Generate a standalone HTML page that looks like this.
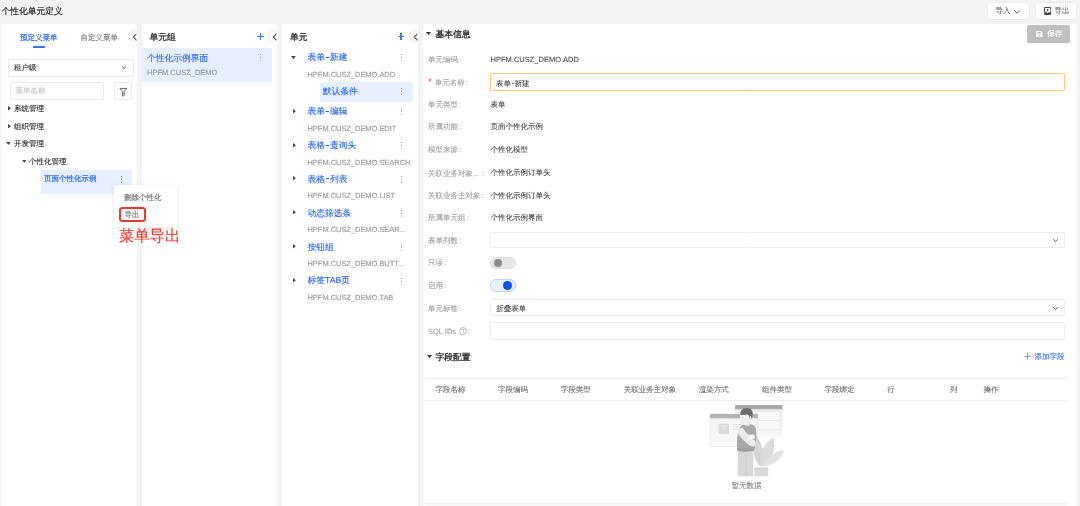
<!DOCTYPE html>
<html><head><meta charset="utf-8">
<style>
*{box-sizing:border-box;margin:0;padding:0}
html,body{width:1080px;height:506px;overflow:hidden}
body{background:#f2f3f5;font-family:"Liberation Sans",sans-serif;position:relative;color:#333;text-rendering:geometricPrecision}
.a{position:absolute;white-space:nowrap;line-height:20px;height:20px;font-size:7.5px;-webkit-text-stroke:0.15px currentColor}
.p{position:absolute;background:#fff;top:24.2px;bottom:0;border-radius:2px 2px 0 0}
.L{font-size:8.75px}
.b{-webkit-text-stroke:0.32px currentColor}
.m{-webkit-text-stroke:0.16px currentColor}
.blue{color:#1f62f2}
.L.blue{-webkit-text-stroke:0.1px currentColor}
.g9{color:#999}
.g6{color:#666}
.box{position:absolute;border:0.7px solid #eaeaea;border-radius:2px;background:#fff}
.circ{position:absolute;width:12px;height:12px;border-radius:50%;border:0.75px solid #e6e6e6;background:#fff}
.circ svg{position:absolute;left:0;top:0}
.tri{position:absolute}
.keb{position:absolute;width:1.2px;height:1.2px;background:#3070f2;border-radius:50%;box-shadow:0 2.7px 0 #3070f2,0 5.4px 0 #3070f2}
.plus{position:absolute;width:6.8px;height:6.8px}
.plus:before{content:"";position:absolute;left:0;top:2.8px;width:6.8px;height:1.2px;background:#3d78f4}
.plus:after{content:"";position:absolute;left:2.8px;top:0;width:1.2px;height:6.8px;background:#3d78f4}
.lab{-webkit-text-stroke:0.08px currentColor;position:absolute;left:428px;white-space:nowrap;line-height:20px;height:20px;font-size:7.5px;color:#999}
.val{-webkit-text-stroke:0.06px currentColor;position:absolute;left:490.6px;white-space:nowrap;line-height:20px;height:20px;font-size:7.5px;color:#3a3a3a}
.inp{position:absolute;left:490.25px;width:574.5px;border:0.7px solid #ececec;border-radius:1.5px;background:#fff}
.th{-webkit-text-stroke:0.1px currentColor;position:absolute;top:379.5px;white-space:nowrap;line-height:20px;height:20px;font-size:7.5px;color:#6e6e6e}
.chev{position:absolute}
.c{font-style:normal;margin-left:1.2px}
.hy{display:inline-block;position:relative;width:5px;height:1px}
.hy:after{content:"";position:absolute;left:0.7px;top:-2.6px;width:3.6px;height:0.85px;background:currentColor}
.hy2{display:inline-block;position:relative;width:3.6px;height:1px}
.hy2:after{content:"";position:absolute;left:0.6px;top:-1.7px;width:2.4px;height:0.8px;background:#777}
.code{font-size:7.45px}
#root{position:absolute;left:0;top:0;width:1080px;height:506px;will-change:transform}
</style></head><body><div id="root">
<!-- header -->
<div class="a L m" style="left:1.5px;top:0.9px;color:#1a1a1a">个性化单元定义</div>
<div class="box" style="left:987.4px;top:2.4px;width:42.2px;height:17.2px;border-color:#ebebeb"></div>
<div class="a" style="left:995.5px;top:1.2px;color:#555;-webkit-text-stroke:0.05px #555">导入</div>
<svg class="chev" style="left:1013.7px;top:9.6px" width="6.5" height="4" viewBox="0 0 6.5 4"><path d="M0.5 0.5 L3.25 3.3 L6 0.5" fill="none" stroke="#555" stroke-width="0.95" stroke-linecap="round" stroke-linejoin="round"/></svg>
<div class="box" style="left:1035.3px;top:2.4px;width:42px;height:17.2px;border-color:#ebebeb"></div>
<svg style="position:absolute;left:1043.8px;top:6.9px" width="7.3" height="7.9" viewBox="0 0 7.3 7.9"><rect x="0" y="0" width="7.3" height="7.9" rx="1.1" fill="#4a4a4a"/><path d="M1 1 H6.3 V5.3 H4.5 L3.65 6.2 L2.8 5.3 H1 Z" fill="#fff"/><path d="M3.65 2 V4.3" stroke="#4a4a4a" stroke-width="1.1"/><path d="M2.8 3.6 L3.65 4.6 L4.5 3.6 Z" fill="#4a4a4a"/></svg>
<div class="a" style="left:1054.5px;top:1.2px;color:#555;-webkit-text-stroke:0.05px #555">导出</div>

<div style="position:absolute;left:136px;top:24.2px;width:287px;bottom:0;background:#f4f4f4"></div>
<!-- panel 1 -->
<div class="p" style="left:1.2px;width:135.8px"></div>
<div class="a m blue" style="left:20px;top:28px">预定义菜单</div>
<div class="a" style="left:80.5px;top:28px;color:#7a7a7a">自定义菜单</div>
<div style="position:absolute;left:32.5px;top:46px;width:12.3px;height:1.6px;background:#3a72f3"></div>
<div class="box" style="left:8px;top:59px;width:126px;height:17.5px"></div>
<div class="a" style="left:14px;top:58px;color:#333">租户级</div>
<svg class="chev" style="left:121.8px;top:66.1px" width="4.5" height="3.2" viewBox="0 0 4.5 3.2"><path d="M0.5 0.5 L2.25 2.6 L4 0.5" fill="none" stroke="#555" stroke-width="0.95" stroke-linecap="round" stroke-linejoin="round"/></svg>
<div class="box" style="left:10px;top:82px;width:94px;height:17.5px"></div>
<div class="a" style="left:15.5px;top:81px;color:#c4c4c4">菜单名称</div>
<div class="box" style="left:114px;top:82px;width:18px;height:17.5px"></div>
<svg style="position:absolute;left:118.6px;top:87px" width="9" height="10" viewBox="0 0 9 10"><path d="M0.9 1.4 H7.9 L5.2 4.6 V8.4 L3.7 9.2 V4.6 Z" fill="none" stroke="#555" stroke-width="0.9" stroke-linejoin="round"/><rect x="3.8" y="5" width="1.3" height="3.6" fill="#aaa"/></svg>
<div class="circ" style="left:127.5px;top:30px"><svg width="12" height="12" viewBox="0 0 12 12"><path d="M7.1 3.1 L4.3 6 L7.1 8.9" fill="none" stroke="#555" stroke-width="1.1" stroke-linecap="round" stroke-linejoin="round"/></svg></div>

<svg class="tri" style="left:7.9px;top:106.3px" width="3.1" height="4.4" viewBox="0 0 3.1 4.4"><path d="M0 0 L3.1 2.20 L0 4.4 Z" fill="#444"/></svg>
<div class="a" style="left:14px;top:99px">系统管理</div>
<svg class="tri" style="left:7.9px;top:123.8px" width="3.1" height="4.4" viewBox="0 0 3.1 4.4"><path d="M0 0 L3.1 2.20 L0 4.4 Z" fill="#444"/></svg>
<div class="a" style="left:14px;top:116.5px">组织管理</div>
<svg class="tri" style="left:6.3px;top:142.4px" width="4.8" height="2.9" viewBox="0 0 4.8 2.9"><path d="M0 0 L4.8 0 L2.40 2.9 Z" fill="#444"/></svg>
<div class="a" style="left:14px;top:134px">开发管理</div>
<svg class="tri" style="left:21.6px;top:159.9px" width="4.6" height="2.8" viewBox="0 0 4.6 2.8"><path d="M0 0 L4.6 0 L2.30 2.8 Z" fill="#444"/></svg>
<div class="a" style="left:29px;top:151.5px">个性化管理</div>
<div style="position:absolute;left:41px;top:170px;width:91px;height:24px;background:#e5efff;border-radius:1px"></div>
<div class="a m blue" style="left:44px;top:168.9px">页面个性化示例</div>
<div class="keb" style="left:120.5px;top:175.5px"></div>

<!-- panel 2 -->
<div class="p" style="left:142px;width:135px"></div>
<div class="a L b" style="left:149.5px;top:26.8px;color:#2b2b2b">单元组</div>
<div class="plus" style="left:257.2px;top:33.4px"></div>
<div style="position:absolute;left:142px;top:48px;width:130px;height:34px;background:#e5efff"></div>
<div class="a L blue" style="left:147px;top:47.75px">个性化示例界面</div>
<div class="a g9" style="left:147px;top:62.5px">HPFM.CUSZ_DEMO</div>
<div class="keb" style="left:260.3px;top:54px"></div>
<div class="circ" style="left:267.9px;top:30px"><svg width="12" height="12" viewBox="0 0 12 12"><path d="M7.1 3.1 L4.3 6 L7.1 8.9" fill="none" stroke="#555" stroke-width="1.1" stroke-linecap="round" stroke-linejoin="round"/></svg></div>

<!-- panel 3 -->
<div class="p" style="left:282px;width:136px"></div>
<div class="a L b" style="left:290px;top:26.5px;color:#2b2b2b">单元</div>
<div class="plus" style="left:397.6px;top:33.4px"></div>
<div class="circ" style="left:408.5px;top:30px"><svg width="12" height="12" viewBox="0 0 12 12"><path d="M7.1 3.1 L4.3 6 L7.1 8.9" fill="none" stroke="#555" stroke-width="1.1" stroke-linecap="round" stroke-linejoin="round"/></svg></div>

<svg class="tri" style="left:291.2px;top:56.1px" width="4.8" height="2.9" viewBox="0 0 4.8 2.9"><path d="M0 0 L4.8 0 L2.40 2.9 Z" fill="#444"/></svg>
<div class="a L blue" style="left:307.5px;top:47.4px">表单<span class="hy"></span>新建</div>
<div class="keb" style="left:400.7px;top:54px"></div>
<div class="a g9 code" style="left:307.5px;top:64.7px">HPFM.CUSZ_DEMO.ADD</div>
<div style="position:absolute;left:320px;top:82px;width:92.7px;height:20px;background:#e5efff;border-radius:2px"></div>
<div class="a L blue" style="left:322.7px;top:81.4px">默认条件</div>
<div class="keb" style="left:400.7px;top:88px"></div>

<svg class="tri" style="left:292.8px;top:108.9px" width="2.9" height="4.5" viewBox="0 0 2.9 4.5"><path d="M0 0 L2.9 2.25 L0 4.5 Z" fill="#444"/></svg>
<div class="a L blue" style="left:307.5px;top:101.4px">表单<span class="hy"></span>编辑</div>
<div class="keb" style="left:400.7px;top:108px"></div>
<div class="a g9 code" style="left:307.5px;top:118.5px">HPFM.CUSZ_DEMO.EDIT</div>

<svg class="tri" style="left:292.8px;top:142.9px" width="2.9" height="4.5" viewBox="0 0 2.9 4.5"><path d="M0 0 L2.9 2.25 L0 4.5 Z" fill="#444"/></svg>
<div class="a L blue" style="left:307.5px;top:135.3px">表格<span class="hy"></span>查询头</div>
<div class="keb" style="left:400.7px;top:142px"></div>
<div class="a g9 code" style="left:307.5px;top:152.7px">HPFM.CUSZ_DEMO.SEARCH</div>

<svg class="tri" style="left:292.8px;top:176.4px" width="2.9" height="4.5" viewBox="0 0 2.9 4.5"><path d="M0 0 L2.9 2.25 L0 4.5 Z" fill="#444"/></svg>
<div class="a L blue" style="left:307.5px;top:168.7px">表格<span class="hy"></span>列表</div>
<div class="keb" style="left:400.7px;top:175.5px"></div>
<div class="a g9 code" style="left:307.5px;top:186.4px">HPFM.CUSZ_DEMO.LIST</div>

<svg class="tri" style="left:292.8px;top:210.4px" width="2.9" height="4.5" viewBox="0 0 2.9 4.5"><path d="M0 0 L2.9 2.25 L0 4.5 Z" fill="#444"/></svg>
<div class="a L blue" style="left:307.5px;top:202.5px">动态筛选条</div>
<div class="keb" style="left:400.7px;top:209.5px"></div>
<div class="a g9 code" style="left:307.5px;top:220.2px">HPFM.CUSZ_DEMO.SEAR...</div>

<svg class="tri" style="left:292.8px;top:244.4px" width="2.9" height="4.5" viewBox="0 0 2.9 4.5"><path d="M0 0 L2.9 2.25 L0 4.5 Z" fill="#444"/></svg>
<div class="a L blue" style="left:307.5px;top:236.6px">按钮组</div>
<div class="keb" style="left:400.7px;top:243.5px"></div>
<div class="a g9 code" style="left:307.5px;top:254.3px">HPFM.CUSZ_DEMO.BUTT...</div>

<svg class="tri" style="left:292.8px;top:278.4px" width="2.9" height="4.5" viewBox="0 0 2.9 4.5"><path d="M0 0 L2.9 2.25 L0 4.5 Z" fill="#444"/></svg>
<div class="a L blue" style="left:307.5px;top:270.4px">标签TAB页</div>
<div class="keb" style="left:400.7px;top:277.5px"></div>
<div class="a g9 code" style="left:307.5px;top:287.8px">HPFM.CUSZ_DEMO.TAB</div>

<!-- panel 4 -->
<div class="p" style="left:422.5px;width:654.6px"></div>
<div style="position:absolute;left:1027px;top:25px;width:43px;height:17.5px;background:#bfbfbf;border-radius:2px"></div>
<svg style="position:absolute;left:1036px;top:30.6px" width="6.5" height="6.7" viewBox="0 0 6.5 6.7"><path d="M0 0.6 Q0 0 0.6 0 H5 L6.5 1.5 V6.1 Q6.5 6.7 5.9 6.7 H0.6 Q0 6.7 0 6.1 Z" fill="#fff"/><rect x="1.2" y="0.9" width="3.4" height="1.6" fill="#bfbfbf"/><circle cx="3.25" cy="4.5" r="0.9" fill="#bfbfbf"/></svg>
<div class="a" style="left:1047.3px;top:24.3px;color:#fff">保存</div>

<svg class="tri" style="left:426.3px;top:32.3px" width="5.1" height="3" viewBox="0 0 5.1 3"><path d="M0 0 L5.1 0 L2.55 3 Z" fill="#333"/></svg>
<div class="a L b" style="left:435.6px;top:24.2px;color:#2b2b2b">基本信息</div>

<div class="lab" style="top:49.8px">单元编码<i class="c">:</i></div>
<div class="val" style="top:50px">HPFM.CUSZ_DEMO.ADD</div>

<div class="a" style="left:428.5px;top:72px;color:#f5222d;font-size:7.5px">*</div>
<div class="lab" style="left:434.75px;top:73.3px">单元名称<i class="c">:</i></div>
<div class="inp" style="top:73.1px;height:17.5px;border:0.95px solid #ffc677"></div>
<div class="val" style="left:496px;top:73.6px">表单<span class="hy2"></span>新建</div>

<div class="lab" style="top:95.2px">单元类型<i class="c">:</i></div>
<div class="val" style="top:95.2px">表单</div>
<div class="lab" style="top:117.3px">所属功能<i class="c">:</i></div>
<div class="val" style="top:117.3px">页面个性化示例</div>
<div class="lab" style="top:140.4px">模型来源<i class="c">:</i></div>
<div class="val" style="top:140.4px">个性化模型</div>
<div class="lab" style="top:163.5px">关联业务对象...<i class="c" style="margin-left:3px">:</i></div>
<div class="val" style="top:163px">个性化示例订单头</div>
<div class="lab" style="top:185.8px">关联业务主对象<i class="c">:</i></div>
<div class="val" style="top:185.8px">个性化示例订单头</div>
<div class="lab" style="top:208.3px">所属单元组<i class="c">:</i></div>
<div class="val" style="top:208.3px">个性化示例界面</div>

<div class="lab" style="top:231.1px">表单列数<i class="c">:</i></div>
<div class="inp" style="top:231.9px;height:16.6px"></div>
<svg class="chev" style="left:1053.2px;top:239.1px" width="5" height="3.4" viewBox="0 0 5 3.4"><path d="M0.5 0.5 L2.5 2.7 L4.5 0.5" fill="none" stroke="#555" stroke-width="0.95" stroke-linecap="round" stroke-linejoin="round"/></svg>

<div class="lab" style="top:253px">只读<i class="c">:</i></div>
<div style="position:absolute;left:490.25px;top:256.9px;width:25.4px;height:12.5px;border-radius:6.25px;background:#e6e6e6;border:0.6px solid #dcdcdc"></div>
<div style="position:absolute;left:493.6px;top:258.6px;width:8.9px;height:8.9px;border-radius:50%;background:#8a8a8a"></div>

<div class="lab" style="top:276.1px">启用<i class="c">:</i></div>
<div style="position:absolute;left:490.25px;top:279.1px;width:25.4px;height:12.5px;border-radius:6.25px;background:#e8f0ff;border:0.6px solid #b3cdff"></div>
<div style="position:absolute;left:503.4px;top:280.8px;width:9.1px;height:9.1px;border-radius:50%;background:#0650f5"></div>

<div class="lab" style="top:299.2px">单元标签<i class="c">:</i></div>
<div class="inp" style="top:299.4px;height:17.1px"></div>
<div class="val" style="left:496.25px;top:299.2px">折叠表单</div>
<svg class="chev" style="left:1053.2px;top:307.1px" width="5" height="3.4" viewBox="0 0 5 3.4"><path d="M0.5 0.5 L2.5 2.7 L4.5 0.5" fill="none" stroke="#555" stroke-width="0.95" stroke-linecap="round" stroke-linejoin="round"/></svg>

<div class="lab" style="top:321.8px">SQL IDs</div>
<svg style="position:absolute;left:458.6px;top:327px" width="8" height="8" viewBox="0 0 8 8"><circle cx="4" cy="4" r="3.4" fill="none" stroke="#a0a0a0" stroke-width="0.75"/><path d="M2.9 3.1 Q2.9 2.1 4 2.1 Q5.1 2.1 5.1 3 Q5.1 3.6 4.1 4.1 V4.8" fill="none" stroke="#a0a0a0" stroke-width="0.7"/><circle cx="4.1" cy="5.8" r="0.42" fill="#a0a0a0"/></svg>
<div class="lab" style="left:467.3px;top:321.2px">:</div>
<div class="inp" style="top:322.25px;height:17.35px"></div>

<svg class="tri" style="left:426.6px;top:355.1px" width="5.1" height="3" viewBox="0 0 5.1 3"><path d="M0 0 L5.1 0 L2.55 3 Z" fill="#333"/></svg>
<div class="a L b" style="left:435.6px;top:347.2px;color:#2b2b2b">字段配置</div>
<div class="plus" style="left:1023.9px;top:352.5px;transform:scale(0.9) scaleX(0.95);opacity:0.85"></div>
<div class="a blue" style="left:1034.5px;top:346.5px;-webkit-text-stroke:0.05px #1f62f2">添加字段</div>

<div style="position:absolute;left:425px;top:378px;width:642.3px;height:0.8px;background:#eeeeee"></div>
<div style="position:absolute;left:425px;top:400.3px;width:642.3px;height:0.8px;background:#eeeeee"></div>
<div style="position:absolute;left:425px;top:502.8px;width:642.3px;height:3.2px;background:#f8f8f8"></div>
<div style="position:absolute;left:425px;top:502.8px;width:642.3px;height:0.9px;background:#efefef"></div>
<div class="th" style="left:435.5px">字段名称</div>
<div class="th" style="left:498px">字段编码</div>
<div class="th" style="left:560.75px">字段类型</div>
<div class="th" style="left:623.75px">关联业务主对象</div>
<div class="th" style="left:698.8px">渲染方式</div>
<div class="th" style="left:762px">组件类型</div>
<div class="th" style="left:824.5px">字段绑定</div>
<div class="th" style="left:887.25px">行</div>
<div class="th" style="left:950px">列</div>
<div class="th" style="left:983.6px">操作</div>

<!-- empty illustration -->
<svg style="position:absolute;left:705px;top:400px" width="85" height="80" viewBox="0 0 85 80">
<defs>
<linearGradient id="fw" x1="0" y1="0" x2="0" y2="1"><stop offset="0" stop-color="#eeeeee"/><stop offset="1" stop-color="#f8f8f8"/></linearGradient>
<linearGradient id="bw" x1="0" y1="0" x2="0" y2="1"><stop offset="0" stop-color="#ececec"/><stop offset="0.75" stop-color="#f2f2f2"/><stop offset="1" stop-color="#fbfbfb"/></linearGradient>
</defs>
<rect x="30" y="5" width="47.4" height="33" fill="url(#bw)"/>
<rect x="30" y="5" width="47.4" height="4.2" fill="#a9a9a9"/>
<rect x="52.5" y="11.8" width="22.5" height="8.4" fill="#f9f9f9" stroke="#e2e2e2" stroke-width="0.5"/>
<rect x="52.5" y="20.8" width="22.5" height="8.4" fill="#f9f9f9" stroke="#e2e2e2" stroke-width="0.5"/>
<rect x="5" y="14" width="47.9" height="32.6" fill="url(#fw)" stroke="#e4e4e4" stroke-width="0.5"/>
<rect x="5" y="14" width="47.9" height="4.2" fill="#b4b4b4"/>
<rect x="7.5" y="20.5" width="43" height="23.5" fill="#f7f7f7"/>
<rect x="13.4" y="23.7" width="10.6" height="10.3" fill="#dcdcdc"/>
<path d="M17.3 26.8 Q17.3 25.4 18.7 25.4 Q20.1 25.4 20.1 26.7 Q20.1 27.7 18.8 28.3 V29.6" fill="none" stroke="#f5f5f5" stroke-width="0.9"/>
<circle cx="18.8" cy="31.3" r="0.55" fill="#f5f5f5"/>
<path d="M27 24.5 H36 M27 26.9 H36 M27 29.2 H33" stroke="#e2e2e2" stroke-width="0.8"/>
<!-- plant -->
<path d="M55.5 66.5 C47.5 59 46.5 46 51.5 36.8 C58.5 45 60.5 57 55.5 66.5 Z" fill="#d5d5d5"/>
<path d="M56.5 66.5 C53.5 55 58 43 68.5 37.5 C71.5 49 66.5 61 56.5 66.5 Z" fill="#dbdbdb"/>
<path d="M57.5 66.5 C62.5 57 70 51 78.8 50 C77.5 59 68.5 65.5 57.5 66.5 Z" fill="#e2e2e2"/>
<rect x="49.4" y="68" width="13.8" height="8.3" fill="#d9d9d9"/>
<rect x="49.4" y="67.6" width="13.8" height="1.4" fill="#cdcdcd"/>
<!-- person -->
<path d="M32.6 76.3 L32.8 50.5 Q40 49 48.4 50.5 L48.2 76.3 Z" fill="#d8d8d8"/>
<path d="M40.2 53 Q40.8 65 41.6 76.3" stroke="#c8c8c8" stroke-width="0.7" fill="none"/>
<path d="M36.5 25.2 Q40 23.8 44.5 24 Q50 24.6 51 29 Q52 36 50.8 43 Q50 47.5 49 50.8 Q40.5 52 32.4 50.8 Q31.7 45 32.2 38 Q32.8 30 36.5 25.2 Z" fill="#a8a8a8"/>
<path d="M32.5 48 Q40.5 49.5 48.9 48.3 L48.8 50.8 Q40.5 52 32.4 50.8 Z" fill="#9c9c9c"/>
<path d="M40.3 21.5 L44.6 21.8 L44.9 25.2 Q42.4 26.3 40.1 25.2 Z" fill="#e6e6e6"/>
<path d="M35 15.5 Q34.5 20.5 36.5 23.5 Q39 25.6 42.5 24.6 Q44.6 22 44.6 17 Q44 13.2 40 13.2 Q35.5 13.2 35 15.5 Z" fill="#efefef"/>
<path d="M35.3 14.8 Q34.8 8.2 41.3 7.9 Q47.8 7.8 47.8 13.6 Q47.7 17.6 45.9 19.2 L44.6 19 Q44.4 15.2 42.5 14.4 Q38.6 15.1 35.3 14.8 Z" fill="#6b6b6b"/>
<ellipse cx="45.3" cy="17.6" rx="1" ry="1.5" fill="#e0e0e0"/>
<circle cx="37.9" cy="17.4" r="0.45" fill="#888"/>
<path d="M32.8 31 Q34.6 27.8 37 27.6 Q39.4 29.8 41.5 33 Q45 37 49.8 40.5 Q51.6 43 50.6 45.6 Q48 47.6 44.2 45.2 Q38.8 41.2 35 36.5 Q32.6 33.6 32.8 31 Z" fill="#ececec"/>
<path d="M42.6 35 Q45.8 34.2 49.4 34.5 L49.8 38.4 Q46.2 38.6 43.2 38.7 Z" fill="#f8f8f8"/>
</svg>
<div class="a" style="left:731.6px;top:476px;color:#808080;-webkit-text-stroke:0.08px #808080">暂无数据</div>
<!-- dropdown -->
<div style="position:absolute;left:114px;top:184.6px;width:63px;height:42.5px;background:#fff;box-shadow:0 1px 4px rgba(0,0,0,0.12);border-radius:2px"></div>
<div class="a" style="left:124px;top:188px;color:#707070">删除个性化</div>
<div style="position:absolute;left:119px;top:207px;width:27px;height:15px;border:2px solid #ec3a2e;border-radius:3.5px"></div>
<div class="a" style="left:124.5px;top:205.3px;color:#707070">导出</div>
<div class="a" style="left:119px;top:227px;font-size:15.3px;color:#f2392c;-webkit-text-stroke:0.18px #f2392c">菜单导出</div>

</div></body></html>
